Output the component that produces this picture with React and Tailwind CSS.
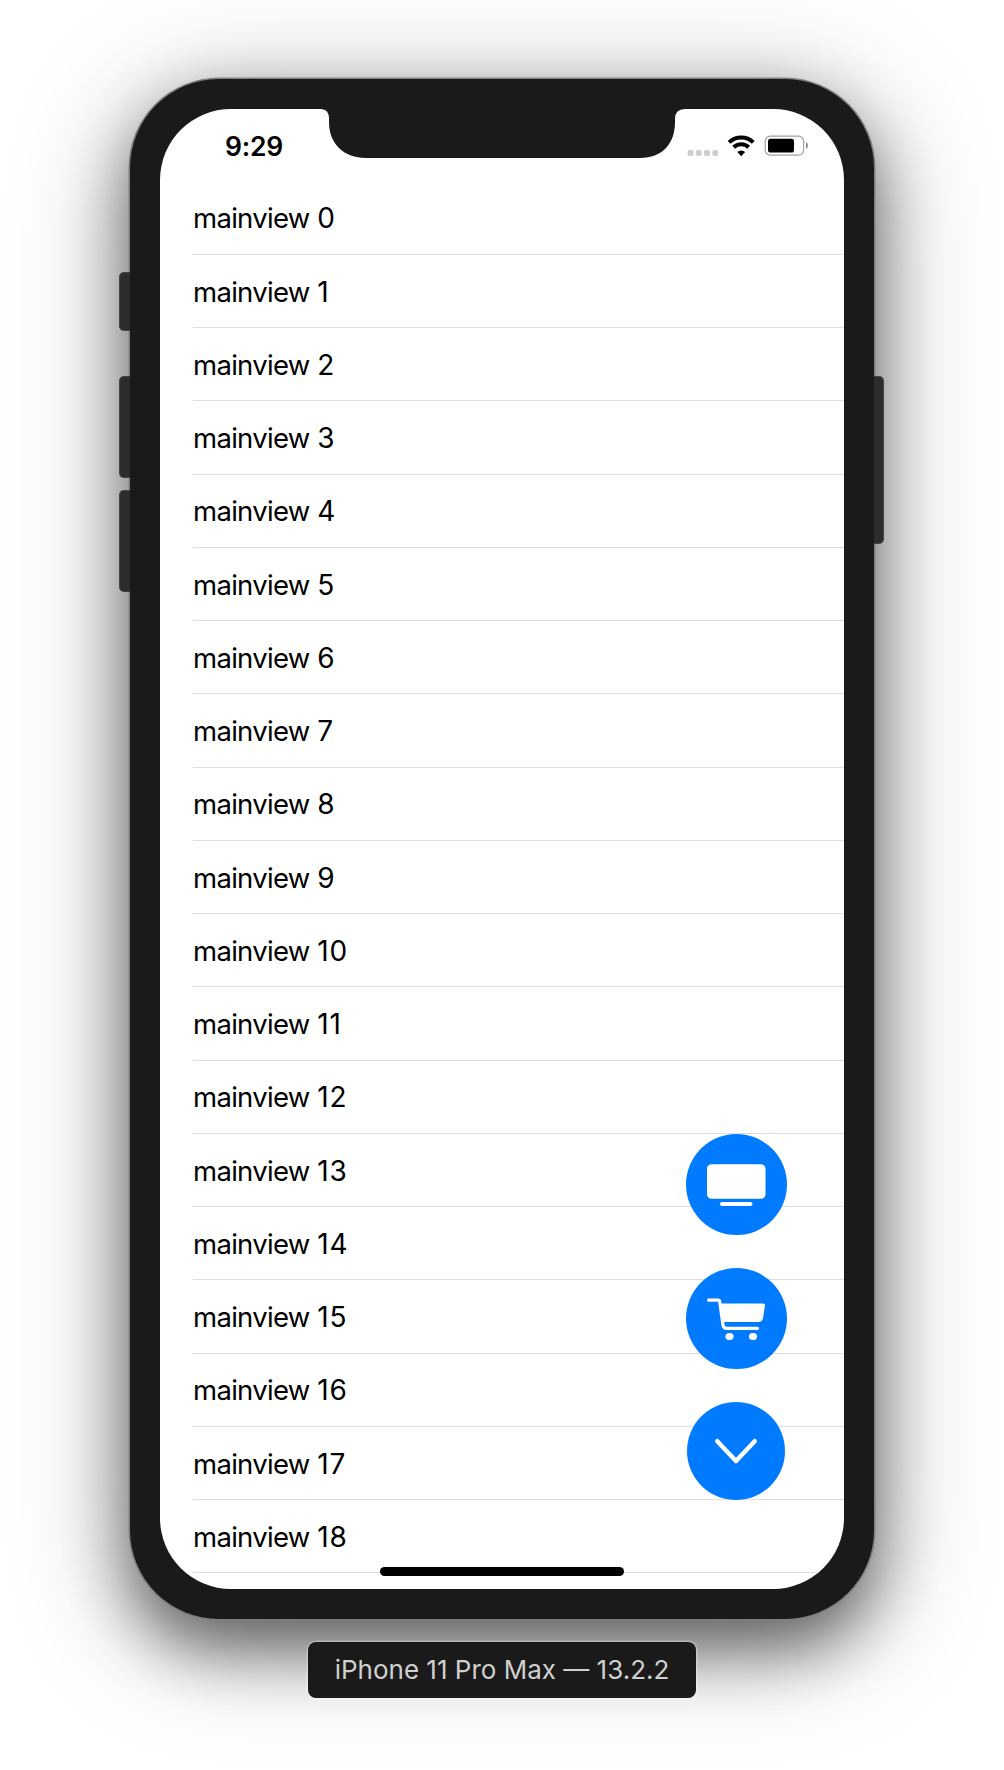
import React from "react";

const rows = Array.from({ length: 19 }, (_, i) => i);

function StatusIcons() {
  return (
    <svg className="mt-[26px] shrink-0" width="124" height="22" viewBox="0 0 124 22">
      {[1.5, 9.7, 18, 26.3].map((x) => (
        <rect key={x} x={x} y="15" width="6" height="6" rx="2" fill="#cdcdcd" />
      ))}
      <g fill="none" stroke="#000" strokeWidth="4">
        <path d="M43.1 7.4a17.4 17.4 0 0 1 24.2 0" />
        <path d="M47.7 12.3a10.8 10.8 0 0 1 15 0" />
      </g>
      <path d="M55.2 21.2l-3.900-4.200a5.700 5.700 0 0 1 7.800 0z" fill="#000" />
      <rect x="79.2" y="1.1" width="38.4" height="19" rx="5" fill="#fff" stroke="#a0a0a0" strokeWidth="1.2" />
      <rect x="82" y="3.8" width="26" height="13.8" rx="2.6" fill="#000" />
      <path d="M120 7.3c2.600.8 2.600 5.800 0 6.600z" fill="#888" />
    </svg>
  );
}

function Notch() {
  return (
    <svg className="-mt-px shrink-0" width="372" height="51" viewBox="0 0 372 51">
      <path
        d="M4 0V1H5Q13 1 13 11V14C13 36 28 50 50 50H324C346 50 359 36 359 14V11Q359 1 369 1H370V0Z"
        fill="#1a1a1a"
      />
    </svg>
  );
}

function StatusBar() {
  return (
    <div className="flex h-[72.6px] items-start">
      <div className="w-[156px] shrink-0 pl-[65px] pt-[20px] text-[26.5px] font-semibold leading-[34px] tracking-[-0.2px]">
        9:29
      </div>
      <Notch />
      <div className="-ml-[2px] flex">
        <StatusIcons />
      </div>
    </div>
  );
}

function ActionButtons() {
  return (
    <div className="absolute right-[57.5px] top-[1025px] flex flex-col items-center gap-[33px]">
      <div className="flex h-[101px] w-[101px] items-center justify-center rounded-full bg-[#007aff]">
        <svg width="60" height="44" viewBox="0 0 60 44" fill="#fff">
          <rect x="1" y="1.3" width="58.5" height="34.5" rx="4.5" />
          <rect x="14" y="39" width="32.5" height="4" rx="2" />
        </svg>
      </div>
      <div className="flex h-[101px] w-[101px] items-center justify-center rounded-full bg-[#007aff]">
        <svg width="60" height="44" viewBox="0 0 60 44">
          <path d="M15 6.5H57Q59.2 6.5 59 8.5L57 21Q56.3 25 52.5 25H17Z" fill="#fff" />
          <path
            d="M2.6 3.2H12.2Q13.5 3.2 13.7 4.8L17 28Q17.5 31.3 20.5 31.3H51.5"
            fill="none"
            stroke="#fff"
            strokeWidth="3.2"
            strokeLinecap="round"
            strokeLinejoin="round"
          />
          <ellipse cx="23.5" cy="39.6" rx="4.1" ry="3.5" fill="#fff" />
          <ellipse cx="47" cy="39.6" rx="4.1" ry="3.5" fill="#fff" />
        </svg>
      </div>
      <div className="flex h-[98px] w-[98px] items-center justify-center rounded-full bg-[#007aff]">
        <svg width="44" height="28" viewBox="0 0 44 28">
          <path d="M3.3 4.2L22 24L40.7 4.2" fill="none" stroke="#fff" strokeWidth="4.5" strokeLinecap="round" strokeLinejoin="round" />
        </svg>
      </div>
    </div>
  );
}

export default function App() {
  return (
    <div className="flex h-[1770px] w-[1004px] flex-col items-center overflow-hidden bg-white pt-[79px] font-['Inter',sans-serif]">
      <div className="relative h-[1540px] w-[744px] shrink-0 rounded-[89px] bg-[#1a1a1a] p-[30px] shadow-[0_0_0_1.5px_#808080,0_30px_62px_rgba(0,0,0,0.48),0_20px_115px_rgba(0,0,0,0.36)]">
        <div className="absolute left-[-11px] top-[193px] flex flex-col">
          <div className="h-[59px] w-[11px] rounded-l-[5px] border border-r-0 border-[#444] bg-[#2c2c2c]" />
          <div className="mt-[45px] h-[102px] w-[11px] rounded-l-[5px] border border-r-0 border-[#444] bg-[#2c2c2c]" />
          <div className="mt-[12px] h-[102px] w-[11px] rounded-l-[5px] border border-r-0 border-[#444] bg-[#2c2c2c]" />
        </div>
        <div className="absolute right-[-9.5px] top-[297px] h-[168px] w-[9.5px] rounded-r-[5px] border border-l-0 border-[#444] bg-[#2c2c2c]" />
        <div className="relative h-[1480px] w-[684px] overflow-hidden rounded-[71px] bg-white text-black">
          <StatusBar />
          <ul className="pl-[33px]">
            {rows.map((n) => (
              <li
                key={n}
                className="flex h-[73.25px] items-center border-b border-[#dedede] pt-[1.5px] text-[27.5px] leading-[34px] tracking-[-0.7px]"
              >
                <span className="whitespace-pre">mainview </span>
                <span className="pl-[0.5px] text-[28px] tracking-[0.9px]">{n}</span>
              </li>
            ))}
          </ul>
          <ActionButtons />
          <div className="absolute left-[220px] top-[1458px] h-[9px] w-[244px] rounded-full bg-black" />
        </div>
      </div>
      <div className="relative mt-[23px] flex h-[56px] w-[388px] shrink-0 items-center justify-center rounded-[8px] bg-[#1a1a1a] pb-[2px] text-[26px] text-[#d0d0d0] shadow-[0_0_0_1.5px_rgba(255,255,255,0.3)]">
        iPhone 11 Pro Max — 13.2.2
      </div>
    </div>
  );
}
